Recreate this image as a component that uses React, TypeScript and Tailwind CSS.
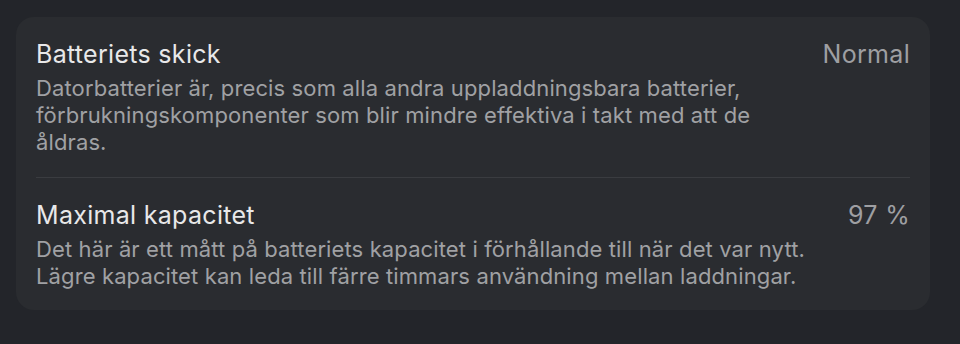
import React from "react";

const rows = [
  {
    title: "Batteriets skick",
    value: "Normal",
    desc: [
      "Datorbatterier är, precis som alla andra uppladdningsbara batterier,",
      "förbrukningskomponenter som blir mindre effektiva i takt med att de",
      "åldras.",
    ],
  },
  {
    title: "Maximal kapacitet",
    value: "97 %",
    desc: [
      "Det här är ett mått på batteriets kapacitet i förhållande till när det var nytt.",
      "Lägre kapacitet kan leda till färre timmars användning mellan laddningar.",
    ],
  },
];

export default function App() {
  return (
    <div
      className="w-[960px] h-[344px] bg-[#23252a] pt-[17px] pl-[16px] overflow-hidden"
      style={{ fontFamily: "Inter, 'Noto Sans', sans-serif" }}
    >
      <div className="w-[914px] h-[293px] rounded-[18px] bg-[#2a2c30] px-[20px] flex flex-col">
        {rows.map((r, i) => (
          <div
            key={r.title}
            className={
              i === 0
                ? "pt-[22px] pb-[21px] border-b border-[#3a3c40]"
                : "pt-[22px]"
            }
          >
            <div className="flex justify-between items-baseline mb-[6px]">
              <div className="text-[25px] leading-[30px] tracking-[0.3px] text-[#e8e8e9]">{r.title}</div>
              <div className="text-[25px] leading-[30px] tracking-[0.3px] text-[#9e9fa2]">{r.value}</div>
            </div>
            <div className="text-[22px] leading-[27px] tracking-[0.12px] text-[#a0a1a4]">
              {r.desc.map((d) => (
                <div key={d}>{d}</div>
              ))}
            </div>
          </div>
        ))}
      </div>
    </div>
  );
}
